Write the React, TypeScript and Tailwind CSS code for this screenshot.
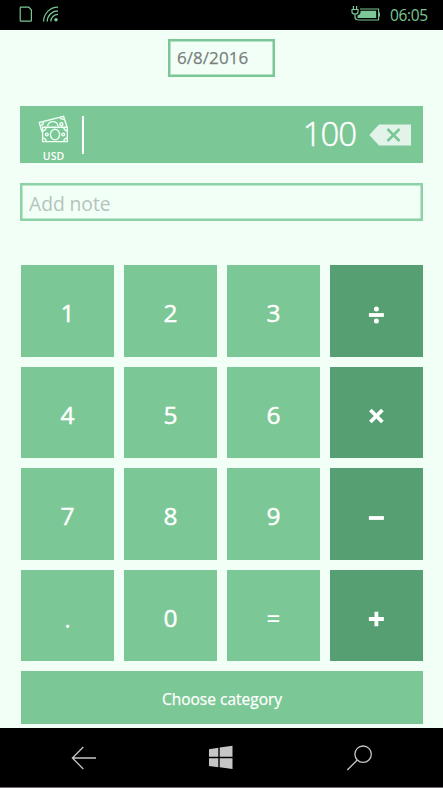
import { useState } from "react";
import clsx from "clsx";

type Operator = "divide" | "multiply" | "subtract" | "add";

const ROWS: { keys: string[]; operator: Operator }[] = [
  { keys: ["1", "2", "3"], operator: "divide" },
  { keys: ["4", "5", "6"], operator: "multiply" },
  { keys: ["7", "8", "9"], operator: "subtract" },
  { keys: [".", "0", "="], operator: "add" },
];

function StatusBar() {
  return (
    <header className="flex h-[29.5px] shrink-0 items-start bg-black text-[#7bc795]">
      <svg className="ml-[18px] mt-1 h-6 w-[42px]" viewBox="18 4 42 24" fill="none" stroke="currentColor" strokeWidth="1.2">
        <path d="M21 7.2H28.8L31.4 10V20.4Q31.4 21.2 30.6 21.2H21Q20.2 21.2 20.2 20.4V8Q20.2 7.2 21 7.2Z" />
        <path d="M43.6 21.6A14.4 14.4 0 0 1 58 7.2M47.2 21.6A10.8 10.8 0 0 1 58 10.8M50.8 21.6A7.2 7.2 0 0 1 58 14.4" />
        <circle cx="56" cy="19.7" r="1.8" fill="currentColor" stroke="none" />
      </svg>
      <svg className="ml-auto mr-2.5 mt-1 h-5 w-[30px]" viewBox="350 4 30 20" fill="none" stroke="currentColor">
        <path d="M353.4 6V9M356.6 6V9M352 9.5H358V12Q358 14 355 14Q352 14 352 12ZM355 14V17Q355 19.6 357.5 19.6" strokeWidth="1.2" />
        <path d="M360 9H378.6V20H357.5M379.5 12.4V16.6" strokeWidth="1.1" />
        <path d="M360.5 10.8H376.2V18H357.5V15.5Q360.5 14.6 360.5 12.5Z" fill="currentColor" stroke="none" />
      </svg>
      <span className="mr-[15px] mt-[5px] w-[38px] whitespace-nowrap text-[15.5px] leading-5 tracking-[-0.35px]">06:05</span>
    </header>
  );
}

function BanknotesIcon() {
  return (
    <svg className="h-[30px] w-[34px]" viewBox="37 114 34 30" fill="none" stroke="#effff5" strokeWidth="1.4">
      <path d="M42 132L39.3 122.6L63.6 116.3L67 127" />
      <path d="M47.5 126.3Q48.4 121.6 52.8 121.6Q57.2 121.6 58.2 126.3M40.3 125.8Q44 124.8 43.3 121.6M59.9 117.3Q61.4 119.8 64.7 119" />
      <circle cx="61.4" cy="124.2" r="1.5" />
      <path d="M42.6 127.3H67.3V141.6H42.6Z" />
      <ellipse cx="55" cy="134.6" rx="4.6" ry="5.3" />
      <circle cx="46.8" cy="134.5" r="1.4" />
      <circle cx="63.2" cy="134.5" r="1.4" />
      <path d="M42.6 131Q46 130.6 46.2 127.3M63.7 127.3Q64 130.6 67.3 131M42.6 138Q46 138.3 46.2 141.6M63.7 141.6Q64 138.3 67.3 138" />
    </svg>
  );
}

function OperatorIcon({ operator }: { operator: Operator }) {
  return (
    <svg className="h-5 w-5" viewBox="0.6 0 20 20" fill="none" stroke="white" strokeWidth="3.8">
      {operator === "divide" && (
        <>
          <path d="M2.5 10H17.5" />
          <circle cx="10" cy="4" r="2.5" fill="white" stroke="none" />
          <circle cx="10" cy="16" r="2.5" fill="white" stroke="none" />
        </>
      )}
      {operator === "multiply" && <path d="M4 4L16 16M16 4L4 16" />}
      {operator === "subtract" && <path d="M2.5 10H17.5" />}
      {operator === "add" && <path d="M2.5 10H17.5M10 2.7V17.3" />}
    </svg>
  );
}

function NavBar() {
  return (
    <nav className="flex h-[60px] shrink-0 items-start justify-between border-b border-[#746c70] bg-black pl-[70px] pr-[69px] pt-4">
      <button type="button" aria-label="Back">
        <svg className="h-[27px] w-[28px]" viewBox="70 744 28 27" fill="none" stroke="#c6c6c6" strokeWidth="1.3">
          <path d="M83.3 747L72.4 758L83.3 769M72.4 758H96" />
        </svg>
      </button>
      <button type="button" aria-label="Start">
        <svg className="h-[27px] w-[28px]" viewBox="208 744 28 27" fill="#c6c6c6">
          <path d="M209 749.2L218.3 747.8V756.8H209ZM219.7 747.6L232.5 745.7V756.8H219.7ZM209 758.2H218.3V767.2L209 765.9ZM219.7 758.2H232.5V769L219.7 767.3Z" />
        </svg>
      </button>
      <button type="button" aria-label="Search">
        <svg className="h-[27px] w-[28px]" viewBox="346 744 28 27" fill="none" stroke="#c6c6c6" strokeWidth="1.3">
          <circle cx="363.1" cy="754.2" r="8.2" />
          <path d="M357.3 760L347.3 770" />
        </svg>
      </button>
    </nav>
  );
}

export default function App() {
  const [amount, setAmount] = useState("100");
  const [note, setNote] = useState("");

  return (
    <div className="flex h-[788px] w-[443px] flex-col overflow-hidden bg-[#f1fff7] font-['Open_Sans','Noto_Sans',sans-serif]">
      <StatusBar />

      <main className="flex min-h-0 flex-1 flex-col px-5 pt-[9.5px]">
        <button
          type="button"
          className="ml-[148px] h-[38px] w-[107px] shrink-0 border-2 border-[#7bc795] pb-0.5 pl-[7px] text-left text-[17px] leading-none tracking-[0.05px] text-[#7b7f7d] shadow-[inset_0_0_0_0.5px_#7bc795] [-webkit-text-stroke:0.25px_#7b7f7d]"
        >
          6/8/2016
        </button>

        {/* Amount */}
        <div className="mt-[29px] flex h-[57px] shrink-0 items-center bg-[#7bc795] text-white">
          <div className="flex w-[62px] flex-col items-center self-start pl-[5px] pt-2">
            <BanknotesIcon />
            <span className="mt-[6px] text-[10.5px] font-semibold leading-3">USD</span>
          </div>
          <div className="h-[38px] w-[1.5px] bg-white" />
          <span className="ml-auto pb-0.5 text-[33px] font-light leading-none tracking-[-1.1px] [-webkit-text-stroke:0.5px_white]">{amount}</span>
          <button type="button" aria-label="Delete digit" className="ml-[13px] mr-3" onClick={() => setAmount((a) => a.slice(0, -1))}>
            <svg className="h-[22px] w-[42px]" viewBox="0 0 42 22" fill="none">
              <path d="M0.3 11L10 0.5H42V21.5H10Z" fill="#e2f3e9" />
              <path d="M18.5 5L30.5 17M30.5 5L18.5 17" stroke="#7bc795" strokeWidth="2.6" />
            </svg>
          </button>
        </div>

        <input
          value={note}
          onChange={(e) => setNote(e.target.value)}
          placeholder="Add note"
          className="mt-5 h-[38px] w-[403px] shrink-0 border-2 border-[#8cd2a6] px-[7px] pt-0.5 text-[19.3px] tracking-[-0.05px] text-[#7b7f7d] shadow-[inset_0_0_0_0.5px_#8cd2a6] outline-none placeholder:text-[#b4c4bb]"
        />

        {/* Keypad */}
        <div className="ml-px mt-11 grid h-[396px] w-[402px] shrink-0 grid-cols-4 grid-rows-4 gap-[10px]">
          {ROWS.map((row) => [
            ...row.keys.map((key) => (
              <button
                key={key}
                type="button"
                onClick={() => key !== "=" && setAmount((a) => a + key)}
                className={clsx(
                  "flex items-center justify-center bg-[#7bc795] leading-none text-white",
                  key === "=" || key === "." ? "pt-[7px] text-[25px]" : "pt-[5px] text-[24.5px] [-webkit-text-stroke:0.45px_white]",
                )}
              >
                {key}
              </button>
            )),
            <button
              key={row.operator}
              type="button"
              aria-label={row.operator}
              className="flex items-center justify-center bg-[#559f72] pt-2"
            >
              <OperatorIcon operator={row.operator} />
            </button>,
          ])}
        </div>

        <button type="button" className="ml-px mt-[10px] h-[53px] w-[402px] shrink-0 bg-[#7bc795] pt-1 text-[15.5px] leading-none text-white [-webkit-text-stroke:0.25px_white]">
          Choose category
        </button>
      </main>

      <NavBar />
    </div>
  );
}
